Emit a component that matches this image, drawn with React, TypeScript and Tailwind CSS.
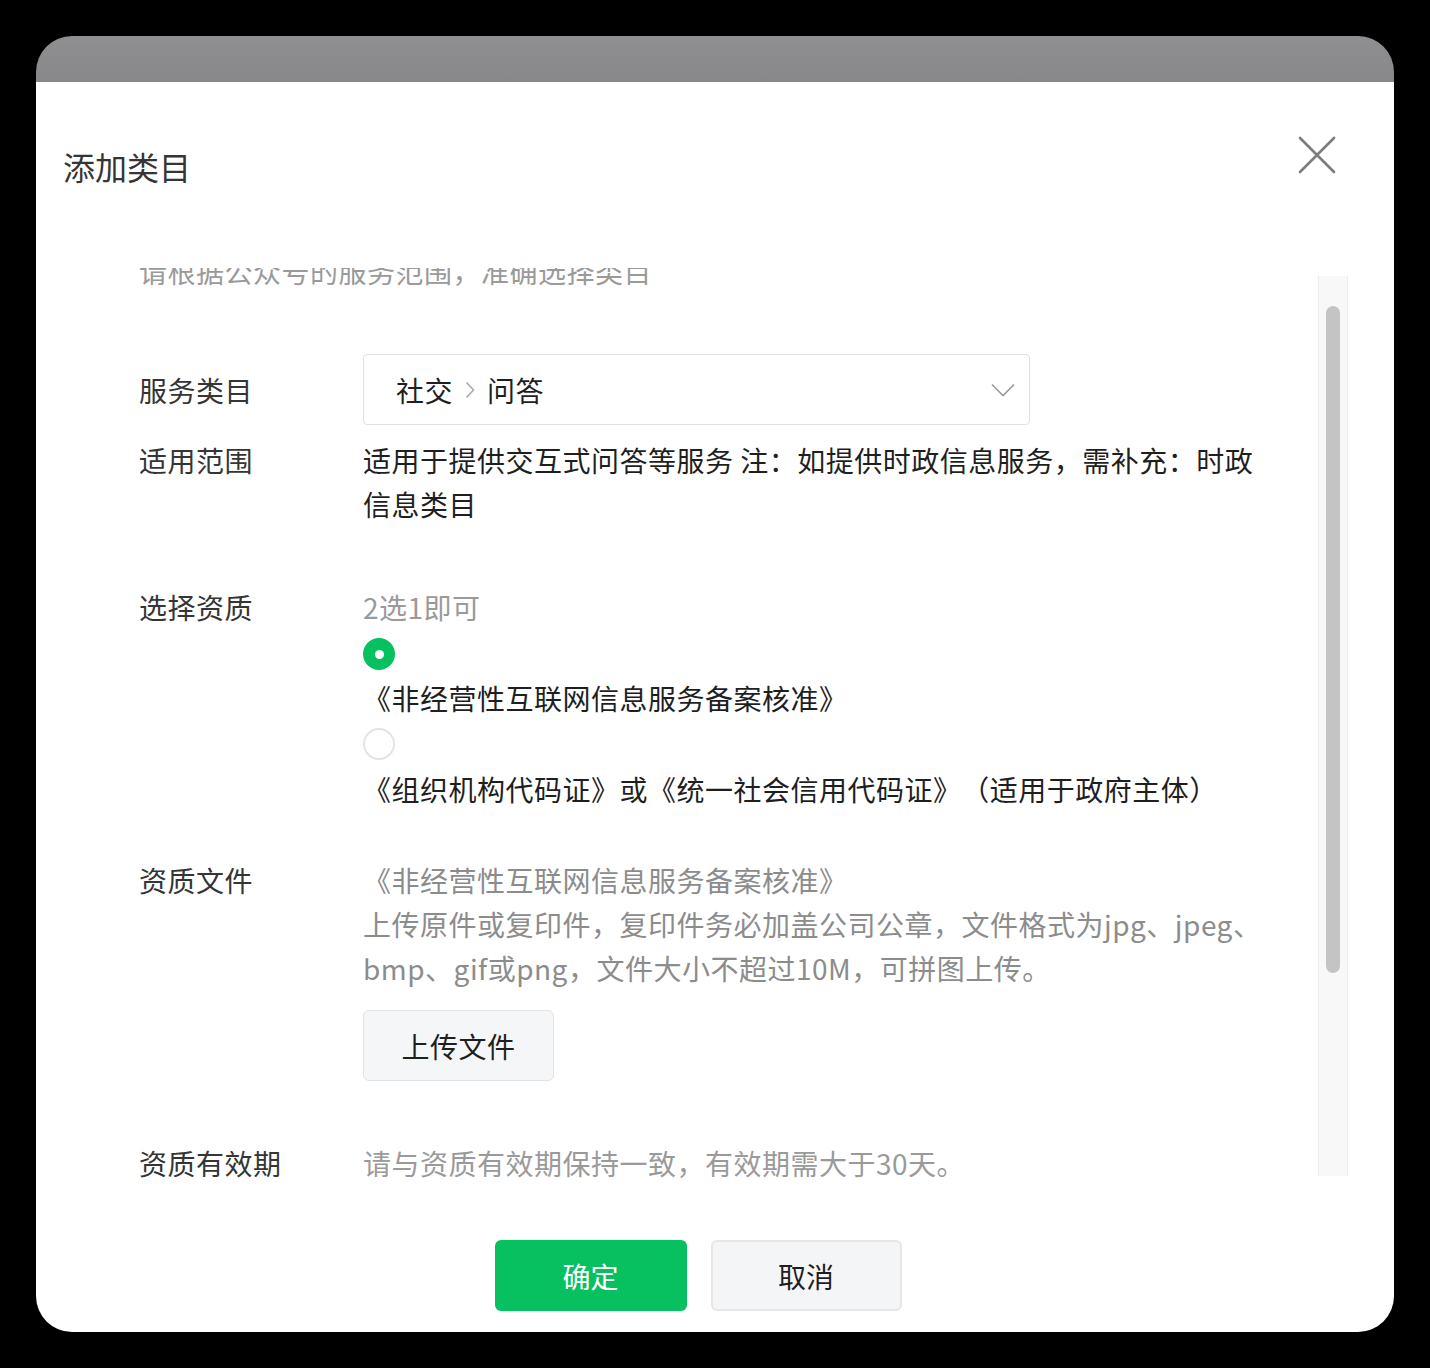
const font = { fontFamily: '"Noto Sans CJK SC", "Noto Sans", sans-serif' };

const Row = ({ label, children, className = "" }: { label: string; children: React.ReactNode; className?: string }) => (
  <div className={`flex ${className}`}>
    <div className="w-[224px] shrink-0 text-[#353535]">{label}</div>
    <div className="w-[900px]">{children}</div>
  </div>
);

const Radio = ({ checked }: { checked?: boolean }) =>
  checked ? (
    <div className="flex h-[32px] w-[32px] items-center justify-center rounded-full bg-[#07c160]">
      <div className="h-[9px] w-[9px] rounded-full bg-white" />
    </div>
  ) : (
    <div className="h-[32px] w-[32px] rounded-full border-2 border-[#e3e3e3] bg-white" />
  );

export default function App() {
  return (
    <div className="min-h-[1368px] w-[1430px] bg-black p-[36px]" style={font}>
      <div className="flex h-[1296px] flex-col overflow-hidden rounded-[36px]">
        <div className="h-[46px] shrink-0 bg-gradient-to-b from-[#8f8f91] to-[#88888a]" />
        <div className="flex flex-1 flex-col bg-white">
          {/* header */}
          <div className="flex h-[186px] shrink-0 items-start justify-between pl-[27px] pr-[58px]">
            <div className="mt-[62px] text-[32px] leading-[44px] text-[#353535]">添加类目</div>
            <svg className="mt-[54px]" width="38" height="38" viewBox="0 0 38 38" fill="none">
              <path d="M2 2L36 36M36 2L2 36" stroke="#7c7c7c" strokeWidth="2.6" strokeLinecap="round" />
            </svg>
          </div>

          {/* body */}
          <div className="flex h-[912px] shrink-0 pr-[46px]">
            <div className="flex-1 overflow-hidden pl-[103px] text-[28px] leading-[44px] tracking-[0.5px] text-[#1f1f1f]">
              <div className="-mt-[19px]">
                <div className="text-[#9a9a9a]">请根据公众号的服务范围，准确选择类目</div>

                <Row label="服务类目" className="mt-[61px] items-center">
                  <div className="flex h-[71px] w-[667px] items-center justify-between rounded-[4px] border border-[#e1e1e1] pl-[32px] pr-[14px]">
                    <div className="flex items-center">
                      <span>社交</span>
                      <svg className="mx-[12px]" width="10" height="18" viewBox="0 0 10 18" fill="none">
                        <path d="M1.5 1.5L8.5 9L1.5 16.5" stroke="#a8a8a8" strokeWidth="1.6" />
                      </svg>
                      <span>问答</span>
                    </div>
                    <svg width="24" height="14" viewBox="0 0 24 14" fill="none">
                      <path d="M1 1.5L12 12.5L23 1.5" stroke="#9b9b9b" strokeWidth="1.6" />
                    </svg>
                  </div>
                </Row>

                <Row label="适用范围" className="mt-[13px]">
                  适用于提供交互式问答等服务 注：如提供时政信息服务，需补充：时政信息类目
                </Row>

                <Row label="选择资质" className="mt-[59px]">
                  <div className="text-[#9a9a9a]">2选1即可</div>
                  <div className="mt-[9px]">
                    <Radio checked />
                  </div>
                  <div className="mt-[6px]">《非经营性互联网信息服务备案核准》</div>
                  <div className="mt-[8px]">
                    <Radio />
                  </div>
                  <div className="mt-[7px]">
                    《组织机构代码证》或《统一社会信用代码证》 <span className="-ml-[7px]">（适用于政府主体）</span>
                  </div>
                </Row>

                <Row label="资质文件" className="mt-[47px]">
                  <div className="w-[910px] text-[#8c8c8c]">
                    《非经营性互联网信息服务备案核准》
                    <br />
                    上传原件或复印件，复印件务必加盖公司公章，文件格式为jpg、jpeg、bmp、gif或png，文件大小不超过10M，可拼图上传。
                  </div>
                  <button className="mt-[20px] flex h-[71px] w-[191px] items-center justify-center rounded-[6px] border border-[#e2e2e2] bg-[#f5f6f7] text-[#1f1f1f]">
                    上传文件
                  </button>
                </Row>

                <Row label="资质有效期" className="mt-[60px]">
                  <div className="text-[#9a9a9a]">请与资质有效期保持一致，有效期需大于30天。</div>
                  <div className="mt-[20px] h-[71px] w-[667px] rounded-[4px] border border-[#e1e1e1]" />
                </Row>
              </div>
            </div>

            {/* scrollbar */}
            <div className="mb-[4px] mt-[8px] w-[30px] border-x border-[#ececec] bg-[#f8f8f8] px-[7px] pt-[30px]">
              <div className="h-[667px] w-full rounded-full bg-[#c4c4c4]" />
            </div>
          </div>

          {/* footer */}
          <div className="flex flex-1 justify-center gap-[24px] pr-[34px] pt-[60px] text-[28px]">
            <button className="h-[71px] w-[192px] rounded-[6px] bg-[#07c160] text-white">确定</button>
            <button className="h-[71px] w-[191px] rounded-[6px] border-2 border-[#e6e6e6] bg-[#f4f5f7] text-[#1f1f1f]">
              取消
            </button>
          </div>
        </div>
      </div>
    </div>
  );
}
